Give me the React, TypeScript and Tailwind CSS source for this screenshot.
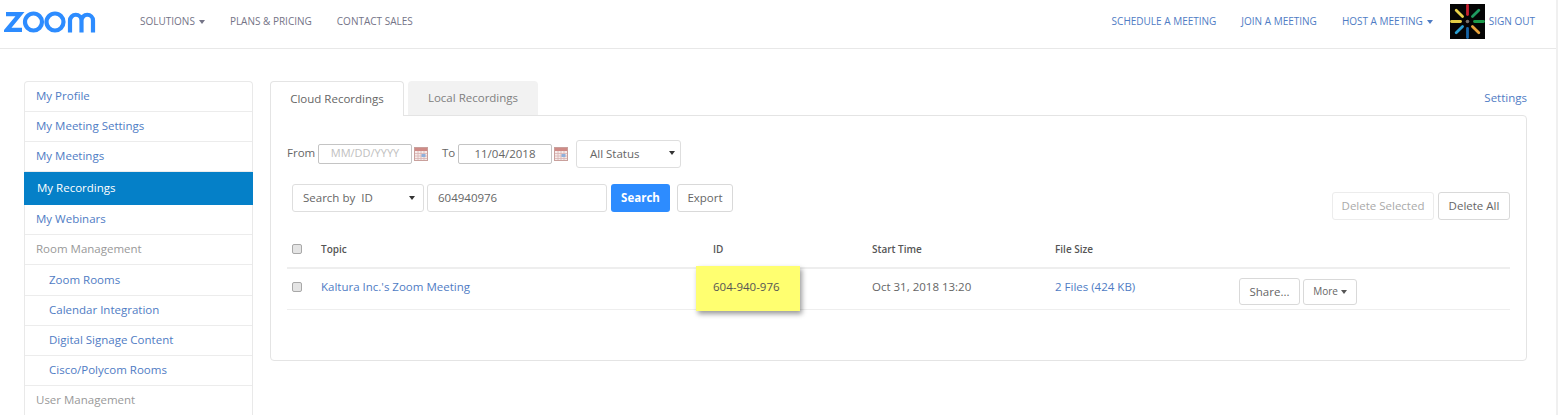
const sideItems = [
  { label: 'My Profile', h: 'h-[30px]' },
  { label: 'My Meeting Settings', h: 'h-[30px]' },
  { label: 'My Meetings', h: 'h-[30px]' },
  { label: 'My Recordings', h: 'h-[33px]', active: true },
  { label: 'My Webinars', h: 'h-[30px]' },
  { label: 'Room Management', h: 'h-[30px]', muted: true },
  { label: 'Zoom Rooms', h: 'h-[31px]', sub: true },
  { label: 'Calendar Integration', h: 'h-[30px]', sub: true },
  { label: 'Digital Signage Content', h: 'h-[30px]', sub: true },
  { label: 'Cisco/Polycom Rooms', h: 'h-[30px]', sub: true },
  { label: 'User Management', h: 'h-[30px]', muted: true },
];

function Caret({ className = '' }: { className?: string }) {
  return <span className={`inline-block w-0 h-0 border-x-[3.5px] border-x-transparent border-t-[4px] ${className}`} />;
}

function ZoomLogo() {
  return (
    <svg width="92" height="22" viewBox="0 0 92 22" fill="none" stroke="#2d8cff" strokeWidth="4.2" aria-label="zoom">
      <path d="M2 3.2 H16 L3 18.8 H18" strokeLinejoin="miter" />
      <circle cx="29.5" cy="11" r="8.5" />
      <circle cx="51" cy="11" r="8.5" />
      <path d="M66 21.5 V9.5 a5.75 5.75 0 0 1 11.5 0 V21.5 M77.5 9.5 a5.75 5.75 0 0 1 11.5 0 V21.5" />
    </svg>
  );
}

function Avatar() {
  const rays = [
    { r: 0, c: '#c8202f' },
    { r: 45, c: '#1f9a5f' },
    { r: 90, c: '#1c9a4a' },
    { r: 135, c: '#e8a33a' },
    { r: 180, c: '#1665a8' },
    { r: 225, c: '#2a9fd0' },
    { r: 270, c: '#e3cf45' },
    { r: 315, c: '#e8d24a' },
  ];
  return (
    <svg width="35" height="35" viewBox="0 0 35 35" className="shrink-0">
      <rect width="35" height="35" fill="#050505" />
      {rays.map((ray) => (
        <line
          key={ray.r}
          x1="17.5"
          y1="10.5"
          x2="17.5"
          y2="1.5"
          stroke={ray.c}
          strokeWidth="2.8"
          strokeLinecap="round"
          transform={`rotate(${ray.r} 17.5 17.5)`}
        />
      ))}
      <circle cx="17.5" cy="17.5" r="1.8" fill="#77706a" />
    </svg>
  );
}

function CalendarIcon() {
  return (
    <svg width="14" height="14" viewBox="0 0 14 14" className="shrink-0">
      <rect x="0.5" y="0.5" width="13" height="13" fill="#f6ecea" stroke="#c9a09c" />
      <rect x="1" y="1" width="12" height="3" fill="#cf8a86" />
      <path d="M1 6.5 H13 M1 9 H13 M1 11.5 H13 M4 4 V13 M7 4 V13 M10 4 V13" stroke="#d8b4b2" strokeWidth="0.8" />
      <rect x="7.5" y="7" width="4" height="3" fill="#8fb0dc" />
    </svg>
  );
}

function Checkbox() {
  return <span className="block w-[10px] h-[10px] rounded-[2px] border border-[#a8a8a8] bg-[#e4e4e4]" />;
}

function Btn({ children, className = '' }: { children: React.ReactNode; className?: string }) {
  return (
    <button className={`flex items-center justify-center rounded-[3px] border ${className}`}>
      {children}
    </button>
  );
}

export default function App() {
  return (
    <div className="h-[415px] w-[1558px] overflow-hidden bg-white font-['Open_Sans',sans-serif] text-[#666] border-r-2 border-[#f0f0f0]">
      {/* Header */}
      <header className="flex h-[49px] items-center border-b border-[#e8e8e8] pb-[5px] pl-[4px] pr-[21px]">
        <ZoomLogo />
        <nav className="ml-[44px] flex gap-[25px] text-[10px] uppercase text-[#747487]">
          <span className="flex items-center gap-[4px]">Solutions <Caret className="border-t-[#747487]" /></span>
          <span>Plans &amp; Pricing</span>
          <span>Contact Sales</span>
        </nav>
        <div className="ml-auto flex items-center text-[10px] uppercase text-[#4f7cc4]">
          <span>Schedule a Meeting</span>
          <span className="ml-[25px]">Join a Meeting</span>
          <span className="ml-[25px] flex items-center gap-[4px]">Host a Meeting <Caret className="border-t-[#4f7cc4]" /></span>
          <span className="ml-[17px] mr-[4px]"><Avatar /></span>
          <span>Sign Out</span>
        </div>
      </header>

      <div className="flex items-start pl-[24px] pt-[32px] text-[11.5px]">
        {/* Sidebar */}
        <aside className="w-[229px] shrink-0 rounded-t-[4px] border-x border-t border-[#e9e9e9]">
          {sideItems.map((item) => (
            <div
              key={item.label}
              className={`flex items-center pb-[1px] ${item.h} ${
                item.active
                  ? '-mx-px bg-[#0580c8] pl-[13px] text-white'
                  : `border-b border-[#ececec] ${item.sub ? 'pl-[24px]' : 'pl-[11px]'} ${item.muted ? 'text-[#999]' : 'text-[#4f7cc4]'}`
              }`}
            >
              {item.label}
            </div>
          ))}
        </aside>

        {/* Main */}
        <main className="ml-[17px] w-[1257px] shrink-0">
          <div className="flex items-end">
            <div className="relative z-10 -mb-px flex h-[35px] w-[134px] items-center justify-center rounded-t-[4px] border-x border-t border-[#e4e4e4] bg-white text-[#666]">
              Cloud Recordings
            </div>
            <div className="ml-[4px] flex h-[34px] w-[130px] items-center justify-center rounded-t-[4px] bg-[#f2f2f2] text-[#808080]">
              Local Recordings
            </div>
            <span className="ml-auto self-center text-[#4f7cc4]">Settings</span>
          </div>

          <section className="h-[246px] rounded-b-[4px] rounded-tr-[4px] border border-[#e4e4e4] px-[16px] pt-[24px]">
            {/* Date filters */}
            <div className="flex h-[28px] items-center">
              <span className="-mt-[2px] w-[31px]">From</span>
              <span className="-mt-[1px] flex h-[20px] w-[94px] items-center justify-center rounded-[2px] border border-[#c4c4c4] text-[11px] text-[#c0c0c0]">MM/DD/YYYY</span>
              <span className="ml-[2px]"><CalendarIcon /></span>
              <span className="-mt-[2px] ml-[14px] w-[16px]">To</span>
              <span className="-mt-[1px] flex h-[20px] w-[94px] items-center justify-center rounded-[2px] border border-[#c4c4c4] text-[#666]">11/04/2018</span>
              <span className="ml-[2px]"><CalendarIcon /></span>
              <span className="ml-[8px] flex h-[28px] w-[105px] items-center justify-between rounded-[3px] border border-[#dedede] pl-[13px] pr-[4px]">
                All Status <Caret className="mb-[2px] mr-[1px] border-t-[#333]" />
              </span>
            </div>

            {/* Search row */}
            <div className="mt-[16px] flex items-start pl-[5px]">
              <div className="flex">
                <div className="flex h-[28px] w-[132px] items-center justify-between rounded-[3px] border border-[#dedede] pl-[10px] pr-[8px]">
                  Search by&nbsp; ID <Caret className="border-t-[#333]" />
                </div>
                <div className="ml-[3px] flex h-[28px] w-[180px] items-center rounded-[3px] border border-[#dedede] pl-[10px]">604940976</div>
                <button className="ml-[4px] h-[28px] w-[59px] rounded-[3px] bg-[#2d8cff] font-bold text-white">Search</button>
                <Btn className="ml-[7px] h-[28px] w-[56px] border-[#d9d9d9] bg-white text-[#666]">Export</Btn>
              </div>
              <div className="ml-auto flex gap-[4px] pt-[8px]">
                <Btn className="h-[28px] w-[102px] border-[#ececec] text-[#aaa]">Delete Selected</Btn>
                <Btn className="h-[28px] w-[72px] border-[#d9d9d9] text-[#666]">Delete All</Btn>
              </div>
            </div>

            {/* Table */}
            <div className="mt-[14px]">
              <div className="grid h-[35px] grid-cols-[34px_392px_159px_183px_184px_1fr] items-center border-b-2 border-[#eeeeee] pb-[3px] text-[10px] font-semibold text-[#555]">
                <span className="pl-[5px]"><Checkbox /></span>
                <span>Topic</span>
                <span>ID</span>
                <span>Start Time</span>
                <span>File Size</span>
                <span />
              </div>
              <div className="grid h-[41px] grid-cols-[34px_392px_159px_183px_184px_1fr] items-center border-b border-[#eeeeee] pb-[6px]">
                <span className="pl-[5px]"><Checkbox /></span>
                <span className="text-[#4f7cc4]">Kaltura Inc.'s Zoom Meeting</span>
                <span className="relative">
                  <span className="absolute -left-[17px] -top-[21px] flex h-[45px] w-[104px] items-center bg-[#ffff70] pb-[3px] pl-[17px] text-[#555] shadow-[2px_3px_5px_rgba(0,0,0,0.4)]">604-940-976</span>
                </span>
                <span>Oct 31, 2018 13:20</span>
                <span className="text-[#4f7cc4]">2 Files (424 KB)</span>
                <div className="mt-[9px] flex items-center gap-[3px]">
                  <Btn className="h-[27px] w-[61px] border-[#d9d9d9] text-[#666]">Share...</Btn>
                  <Btn className="h-[26px] w-[54px] gap-[3px] border-[#d9d9d9] text-[10px] text-[#666]">More <Caret className="border-t-[#555]" /></Btn>
                </div>
              </div>
            </div>
          </section>
        </main>
      </div>
    </div>
  );
}
